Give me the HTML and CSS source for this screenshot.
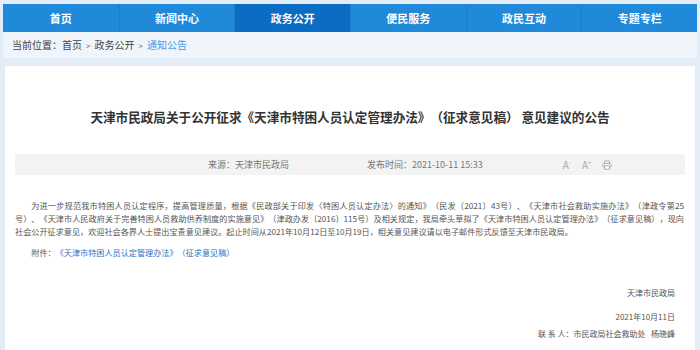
FILE: index.html
```html
<!DOCTYPE html>
<html lang="zh-CN">
<head>
    <meta charset="UTF-8">
    <title>天津市民政局 - 通知公告</title>
    <link rel="stylesheet" href="styles.css">
</head>
<body>
    <div class="nav">
        <a href="#">首页</a>
        <a href="#">新闻中心</a>
        <a href="#" class="active">政务公开</a>
        <a href="#">便民服务</a>
        <a href="#">政民互动</a>
        <a href="#">专题专栏</a>
    </div>
    <div class="crumb">
        当前位置：<a href="#">首页</a><span class="arr">&gt;</span><a href="#">政务公开</a><span class="arr">&gt;</span><a href="#" class="cur">通知公告</a>
    </div>

    <div class="main">
        <h1 class="title">天津市民政局关于公开征求《天津市特困人员认定管理办法》（征求意见稿） 意见建议的公告</h1>
        <div class="meta">
            <span class="source">来源：天津市民政局</span>
            <span class="date">发布时间：2021-10-11 15:33</span>
            <span class="tools">
                <span class="tool">A<sup>-</sup></span>
                <span class="tool">A<sup>+</sup></span>
                <svg class="print" width="10" height="10" viewBox="0 0 10 10">
                    <path d="M2.5 3.5V1h5v2.5" fill="none" stroke="#aaa" stroke-width="0.9"/>
                    <rect x="0.8" y="3.5" width="8.4" height="3.6" rx="1" fill="none" stroke="#aaa" stroke-width="0.9"/>
                    <rect x="2.5" y="5.8" width="5" height="3.4" fill="#fff" stroke="#aaa" stroke-width="0.9"/>
                </svg>
            </span>
        </div>

        <div class="content">
            <p class="para">为进一步规范我市特困人员认定程序，提高管理质量，根据《民政部关于印发〈特困人员认定办法〉的通知》（民发〔2021〕43号）、《天津市社会救助实施办法》（津政令第25号）、《天津市人民政府关于完善特困人员救助供养制度的实施意见》（津政办发〔2016〕115号）及相关规定，我局牵头草拟了《天津市特困人员认定管理办法》（征求意见稿），现向社会公开征求意见，欢迎社会各界人士提出宝贵意见建议。起止时间从2021年10月12日至10月19日，相关意见建议请以电子邮件形式反馈至天津市民政局。</p>
            <p class="attach">附件：<a href="#">《天津市特困人员认定管理办法》（征求意见稿）</a></p>

            <div class="sign">
                <p class="org">天津市民政局</p>
                <p class="day">2021年10月11日</p>
                <p class="contact">联 系 人：市民政局社会救助处&nbsp;&nbsp;&nbsp;杨晓峰</p>
            </div>
        </div>
    </div>
</body>
</html>
```

FILE: styles.css
```css
body {
    margin: 0;
    background-color: #e2edf7;
    font-family: "Noto Sans CJK SC", "Noto Sans", sans-serif;
    color: #333;
    text-spacing-trim: space-all;
}
a {
    text-decoration: none;
    color: inherit;
}
p {
    margin: 0;
}
.nav {
    display: grid;
    grid-template-columns: repeat(6, 1fr);
    margin: 4px 3px 0;
    height: 28px;
    background-color: #2189da;
}
.nav a {
    display: flex;
    align-items: center;
    justify-content: center;
    color: white;
    font-size: 11px;
    font-weight: bold;
    border-left: 1px solid #1b7ecb;
}
.nav a:first-child {
    border-left: none;
}
.nav a.active {
    background-color: #0b6cc3;
}
.crumb {
    margin: 0 3px;
    height: 26px;
    line-height: 26px;
    padding-left: 9px;
    background-color: #eff5fb;
    font-size: 10px;
    color: #444;
}
.crumb .arr {
    margin: 0 4px;
    font-size: 8px;
    color: #666;
}
.crumb .cur {
    color: #4a97e0;
}
.main {
    margin: 8px 5px 0;
    padding: 41px 10px 20px;
    background-color: white;
    min-height: 240px;
}
.title {
    margin: 0;
    text-align: center;
    font-size: 12.6px;
    line-height: 20px;
    color: #333;
}
.meta {
    display: flex;
    align-items: center;
    margin-top: 27px;
    height: 21px;
    padding-left: 193px;
    background-color: #f3f3f3;
    font-size: 9px;
    color: #777;
}
.date {
    margin-left: 78px;
}
.tools {
    display: flex;
    align-items: center;
    margin-left: 80px;
    color: #aaa;
}
.tool {
    font-size: 10px;
    margin-right: 11px;
}
.tool sup {
    font-size: 6px;
}
.print {
    display: block;
}
.content {
    padding: 24px 1px 0 0;
    font-size: 8.15px;
    line-height: 13px;
    color: #555;
}
.para {
    text-indent: 2em;
    text-align: justify;
}
.attach {
    margin-top: 8px;
    text-indent: 2em;
}
.attach a {
    color: #2f72c6;
}
.sign {
    margin-top: 27px;
    padding-right: 9px;
    text-align: right;
    font-size: 8px;
}
.sign .day {
    margin-top: 11px;
}
.sign .contact {
    margin-top: 4px;
}
```
